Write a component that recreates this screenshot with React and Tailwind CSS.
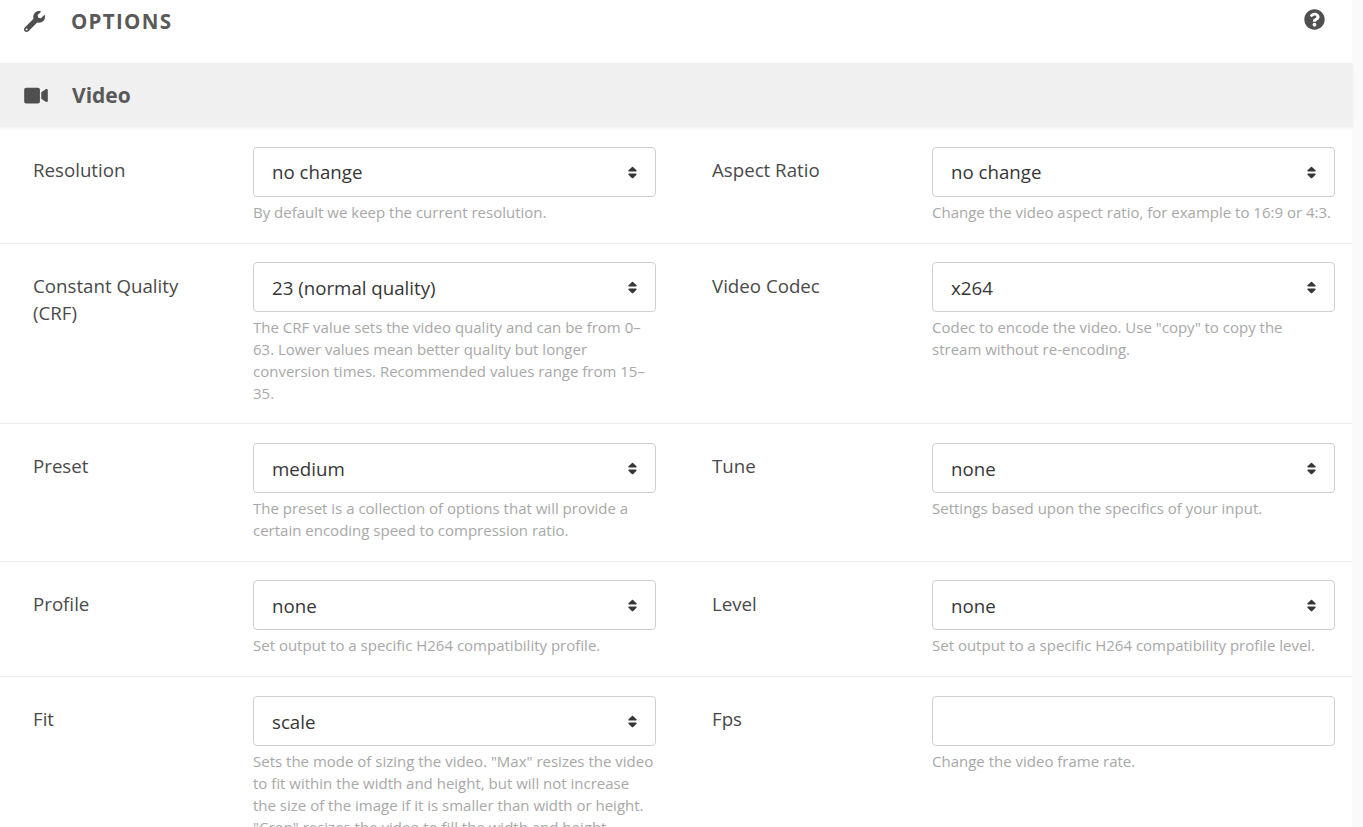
import React from 'react';
import { FaWrench, FaVideo, FaQuestionCircle, FaSort } from 'react-icons/fa';

// label and value offsets differ by a pixel between rows
const rows = [
    {
        height: 'h-[117px] pt-5',
        labelPad: 'pt-[9px]',
        valuePad: 'pt-0',
        left: { label: 'Resolution', value: 'no change', help: 'By default we keep the current resolution.' },
        right: { label: 'Aspect Ratio', value: 'no change', help: 'Change the video aspect ratio, for example to 16:9 or 4:3.' },
    },
    {
        height: 'h-[180px] pt-[18px]',
        labelPad: 'pt-[10px]',
        valuePad: 'pt-0.5',
        left: {
            label: 'Constant Quality (CRF)',
            value: '23 (normal quality)',
            help: 'The CRF value sets the video quality and can be from 0–63. Lower values mean better quality but longer conversion times. Recommended values range from 15–35.',
        },
        right: { label: 'Video Codec', value: 'x264', help: 'Codec to encode the video. Use "copy" to copy the stream without re-encoding.' },
    },
    {
        height: 'h-[138px] pt-[19px]',
        labelPad: 'pt-[9px]',
        valuePad: 'pt-0.5',
        left: { label: 'Preset', value: 'medium', help: 'The preset is a collection of options that will provide a certain encoding speed to compression ratio.' },
        right: { label: 'Tune', value: 'none', help: 'Settings based upon the specifics of your input.' },
    },
    {
        height: 'h-[115px] pt-[18px]',
        labelPad: 'pt-[10px]',
        valuePad: 'pt-0.5',
        left: { label: 'Profile', value: 'none', help: 'Set output to a specific H264 compatibility profile.' },
        right: { label: 'Level', value: 'none', help: 'Set output to a specific H264 compatibility profile level.' },
    },
    {
        height: 'h-[150px] pt-[19px]',
        labelPad: 'pt-[9px]',
        valuePad: 'pt-0.5',
        left: {
            label: 'Fit',
            value: 'scale',
            help: 'Sets the mode of sizing the video. "Max" resizes the video to fit within the width and height, but will not increase the size of the image if it is smaller than width or height. "Crop" resizes the video to fill the width and height dimensions and crops any excess.',
        },
        right: { label: 'Fps', input: true, help: 'Change the video frame rate.' },
    },
];

const Field = ({ label, value, help, input, labelPad, valuePad }) => (
    <div className="flex w-[623px]">
        <div className={`${labelPad} w-[220px] shrink-0 pr-10 text-[18.7px] leading-[27px] text-[#4a4a4a]`}>{label}</div>
        <div className="w-[403px]">
            <div className="flex h-[50px] items-center justify-between rounded border border-[#cfcfcf] bg-white pl-[18px] pr-[17px] text-[18.7px] text-[#363636]">
                <span className={valuePad}>{value}</span>
                {!input && <FaSort className="h-[15px] w-[11px] text-[#363636]" />}
            </div>
            <p className="mt-1 text-[15px] leading-[22px] text-[#a8a8a8]">{help}</p>
        </div>
    </div>
);

const App = () => {
    return (
        <div className="h-[827px] w-[1363px] overflow-hidden bg-[#fafafa] font-['Open_Sans',sans-serif]">
            <div className="w-[1352px] bg-white">
                <div className="flex h-[63px] items-start justify-between pl-6 pr-[27px] pt-[10px]">
                    <div className="flex items-center">
                        <FaWrench className="h-[21px] w-[21px] text-[#4f4f4f]" />
                        <h2 className="ml-[26px] text-[20.5px] font-bold leading-[22px] tracking-[1.3px] text-[#595959]">OPTIONS</h2>
                    </div>
                    <FaQuestionCircle className="mt-[-1px] h-[21px] w-[21px] text-[#4f4f4f]" />
                </div>
                <div className="flex h-[64px] items-center bg-[#f0f0f0] pl-6 pt-px shadow-[0_1px_4px_rgba(0,0,0,0.08)]">
                    <FaVideo className="h-[21px] w-[24px] text-[#4f4f4f]" />
                    <h3 className="ml-6 text-[21px] font-bold text-[#595959]">Video</h3>
                </div>
                {rows.map((row, index) => (
                    <div key={index} className={`${row.height} flex gap-[56px] border-b border-[#ececec] pl-[33px] last:border-b-0`}>
                        <Field {...row.left} labelPad={row.labelPad} valuePad={row.valuePad} />
                        <Field {...row.right} labelPad={row.labelPad} valuePad={row.valuePad} />
                    </div>
                ))}
            </div>
        </div>
    );
};

export default App;
